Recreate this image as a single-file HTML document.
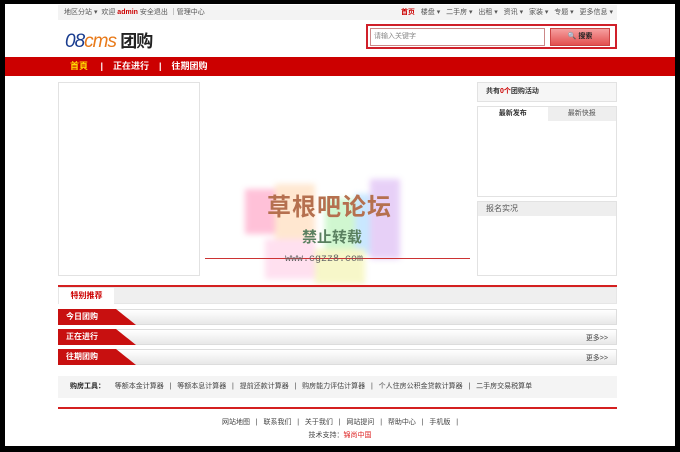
<!DOCTYPE html>
<html><head><meta charset="utf-8"><style>
*{margin:0;padding:0;box-sizing:border-box}
body{width:680px;height:452px;background:#000;font-family:"Liberation Sans","Noto Sans CJK SC",sans-serif;font-size:7px;color:#333;position:relative;overflow:hidden}
.page{position:absolute;left:5px;top:4px;width:670px;height:442px;background:#fff}
.a{position:absolute}
.top{left:53px;top:1px;width:559px;height:15px;background:#f3f3f3;line-height:15px;color:#555}
.nav{left:0;top:53px;width:670px;height:19px;background:#cc0000;color:#fff;font-weight:bold;font-size:9px;line-height:19px}
.box{border:1px solid #e2e2e2}
.bar{left:53px;width:559px;height:16px;border:1px solid #ddd;background:linear-gradient(#fff,#e8e8e8)}
.tag{position:absolute;left:-1px;top:-1px;height:16px;width:78px;background:#c81010;color:#fff;font-weight:bold;font-size:8px;line-height:16px;padding-left:8px;clip-path:polygon(0 0,58px 0,78px 100%,0 100%)}
.more{position:absolute;right:8px;top:3px;color:#444}
</style></head><body><div class="page">
<div class="a top"><span style="margin-left:6px">地区分站 ▾ &nbsp;欢迎 <b style="color:#c00">admin</b> 安全退出 ｜管理中心</span>
<span style="position:absolute;right:4px"><b style="color:#c00">首页</b>&nbsp;&nbsp; 楼盘 ▾ &nbsp; 二手房 ▾ &nbsp; 出租 ▾ &nbsp; 资讯 ▾ &nbsp; 家装 ▾ &nbsp; 专题 ▾ &nbsp; 更多信息 ▾</span></div>
<div class="a" style="left:60px;top:23px;font-size:19px;font-style:italic;color:#1a3d8f;letter-spacing:-1px">08<span style="color:#e87a1a">cms</span> <span style="font-style:normal;color:#222;font-size:17px;font-weight:bold">团购</span></div>
<div class="a" style="left:361px;top:20px;width:251px;height:25px;border:2px solid #d0202a"></div>
<div class="a" style="left:365px;top:24px;width:175px;height:18px;border:1px solid #c88;line-height:16px;padding-left:3px;color:#888">请输入关键字</div>
<div class="a" style="left:545px;top:24px;width:60px;height:18px;background:linear-gradient(#f6a0a0,#e25050);border:1px solid #c44;line-height:16px;text-align:center;font-weight:bold;color:#222">🔍 搜索</div>
<div class="a nav"><span style="margin-left:65px;color:#ffd800">首頁</span>&nbsp;&nbsp;&nbsp;&nbsp; | &nbsp;&nbsp;&nbsp;正在进行 &nbsp;&nbsp;&nbsp;| &nbsp;&nbsp;&nbsp;往期团购</div>
<div class="a box" style="left:53px;top:78px;width:142px;height:194px"></div>
<div class="a box" style="left:472px;top:78px;width:140px;height:20px;background:#f6f6f6;font-weight:bold;line-height:18px;padding-left:8px">共有<span style="color:#c00">0个</span>团购活动</div>
<div class="a box" style="left:472px;top:102px;width:140px;height:91px"><div style="display:flex;line-height:14px;text-align:center"><b style="width:70px;background:#fff">最新发布</b><span style="width:69px;color:#555;background:#eee">最新快报</span></div></div>
<div class="a box" style="left:472px;top:197px;width:140px;height:75px"><div style="background:#eee;height:14px;line-height:14px;padding-left:8px;font-size:8px;color:#555">报名实况</div></div>
<div class="a" style="left:240px;top:175px;width:160px;height:105px;opacity:.45;filter:blur(3px)">
<div class="a" style="left:0;top:10px;width:40px;height:45px;background:#f7a"></div>
<div class="a" style="left:30px;top:5px;width:40px;height:60px;background:#fc9"></div>
<div class="a" style="left:80px;top:20px;width:40px;height:60px;background:#9e9"></div>
<div class="a" style="left:110px;top:15px;width:40px;height:60px;background:#8cf"></div>
<div class="a" style="left:125px;top:0;width:30px;height:80px;background:#c9e"></div>
<div class="a" style="left:20px;top:60px;width:50px;height:40px;background:#fbd"></div>
<div class="a" style="left:70px;top:70px;width:50px;height:35px;background:#ee8"></div>
</div>
<div class="a" style="left:262px;top:183px;font-size:24px;color:#b5704f;font-weight:bold;letter-spacing:1px">草根吧论坛</div>
<div class="a" style="left:297px;top:222px;font-size:15px;color:#5a8060;font-weight:bold">禁止转载</div>
<div class="a" style="left:200px;top:254px;width:265px;height:1px;background:#c33"></div>
<div class="a" style="left:280px;top:250px;font-size:10px;color:#666;font-family:'Liberation Mono',monospace">www.cgzz8.com</div>
<div class="a" style="left:53px;top:281px;width:559px;height:2px;background:#d42020"></div>
<div class="a" style="left:53px;top:283px;width:559px;height:17px;background:#efefef;border:1px solid #e6e6e6"><div style="width:55px;height:16px;background:#fff;color:#c00;font-weight:bold;font-size:8px;text-align:center;line-height:15px">特别推荐</div></div>
<div class="a bar" style="top:305px"><div class="tag">今日团购</div></div>
<div class="a bar" style="top:325px"><div class="tag">正在进行</div><span class="more">更多&gt;&gt;</span></div>
<div class="a bar" style="top:345px"><div class="tag">往期团购</div><span class="more">更多&gt;&gt;</span></div>
<div class="a" style="left:53px;top:372px;width:559px;height:22px;background:#f4f4f4;line-height:22px;color:#444;white-space:nowrap"><b style="margin-left:12px;color:#222">购房工具：</b>&nbsp;&nbsp;&nbsp;&nbsp; 等额本金计算器 &nbsp;&nbsp;| &nbsp;&nbsp;等额本息计算器 &nbsp;&nbsp;| &nbsp;&nbsp;提前还款计算器 &nbsp;&nbsp;| &nbsp;&nbsp;购房能力评估计算器 &nbsp;&nbsp;| &nbsp;&nbsp;个人住房公积金贷款计算器 &nbsp;&nbsp;| &nbsp;&nbsp;二手房交易税算单</div>
<div class="a" style="left:53px;top:403px;width:559px;height:2px;background:#d42020"></div>
<div class="a" style="left:0;top:413px;width:670px;text-align:center;color:#444">网站地图 &nbsp;&nbsp;| &nbsp;&nbsp;联系我们 &nbsp;&nbsp;| &nbsp;&nbsp;关于我们 &nbsp;&nbsp;| &nbsp;&nbsp;网站提问 &nbsp;&nbsp;| &nbsp;&nbsp;帮助中心 &nbsp;&nbsp;| &nbsp;&nbsp;手机版 &nbsp;&nbsp;|</div>
<div class="a" style="left:0;top:426px;width:670px;text-align:center;color:#444">技术支持：<span style="color:#d22">锦尚中国</span></div>
</div></body></html>
